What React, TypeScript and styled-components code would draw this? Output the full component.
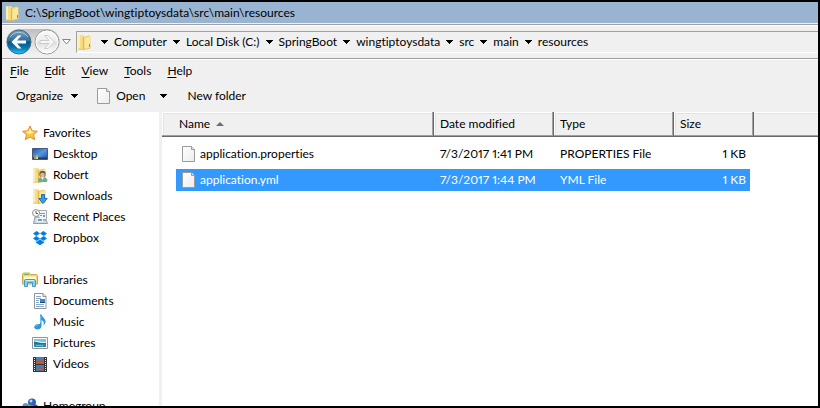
import React from "react";
import styled, { createGlobalStyle, css } from "styled-components";

const GlobalStyle = createGlobalStyle`
  *, *::before, *::after { box-sizing: border-box; }
  body {
    margin: 0;
    background: #000;
    color: #000;
    font: 12px/20px Lato, "Open Sans", sans-serif;
    font-variant-ligatures: none;
    font-variant-numeric: proportional-nums;
  }
  svg { display: block; flex: none; }
`;

const Window = styled.div`
  display: flex;
  flex-direction: column;
  height: 100vh;
  border: 2px solid #000;
  background: #f0f0f0;
  overflow: hidden;
  white-space: nowrap;
`;

const TitleBar = styled.header`
  display: flex;
  flex: none;
  align-items: center;
  gap: 6px;
  height: 21px;
  padding-left: 3px;
  background: #99b4d1;
`;

const Title = styled.h1`
  margin: 0;
  font: inherit;
`;

const AddressRow = styled.div`
  display: flex;
  flex: none;
  align-items: center;
  height: 36px;
  margin-top: 1px;
  padding-left: 4px;
  border-top: 1px solid #a0a0a0;
  border-bottom: 1px solid #fff;
  box-shadow: inset 0 1px #fff, inset 0 -1px #a0a0a0;
`;

const PlainButton = styled.button`
  display: flex;
  flex: none;
  align-items: center;
  padding: 0;
  border: 0;
  background: none;
  color: inherit;
  font: inherit;
`;

const History = styled.div`
  display: flex;
  align-items: center;
  gap: 2px;
  width: 70px;
`;

const HistoryPair = styled.div`
  display: flex;
  gap: 2px;
  border-radius: 13px;
  background: linear-gradient(#bdbdbd, #e2e2e2 60%, #f0f0f0);
`;

const AddressBox = styled.nav`
  display: flex;
  flex: 1;
  align-items: center;
  height: 22px;
  border-top: 1px solid #a0a0a0;
  border-left: 1px solid #a0a0a0;
  border-bottom: 1px solid #fff;
`;

const CrumbList = styled.ol`
  display: flex;
  margin: 0;
  padding: 0 0 0 4px;
  list-style: none;
`;

const Crumb = styled.li`
  display: flex;
  align-items: center;
`;

const CrumbArrow = styled(PlainButton)`
  padding: 0 6px;
`;

const CrumbLink = styled.a`
  color: inherit;
  text-decoration: none;
`;

const MenuBar = styled.nav`
  display: flex;
  flex: none;
  height: 22px;
`;

const MenuItem = styled(PlainButton)`
  padding: 0 8px;
`;

const AccessKey = styled.u`
  text-underline-offset: 2px;
`;

const ToolBar = styled.div`
  display: flex;
  flex: none;
  align-items: center;
  height: 30px;
  padding: 0 0 2px 14px;
`;

const ToolButton = styled(PlainButton)<{ $gap?: number; $after?: number }>`
  gap: ${(p) => p.$gap ?? 8}px;
  margin-right: ${(p) => p.$after ?? 0}px;
`;

const Body = styled.div`
  display: flex;
  flex: 1;
  min-height: 0;
`;

const Sidebar = styled.nav`
  flex: none;
  width: 160px;
  padding-top: 10px;
  border-right: 3px solid #f0f0f0;
  background: #fff;
  overflow: hidden;
`;

const Group = styled.section`
  margin-bottom: 21px;
`;

const PlaceLink = styled.a<{ $nested?: boolean }>`
  display: flex;
  align-items: center;
  gap: 5px;
  height: 21px;
  padding-left: ${(p) => (p.$nested ? 30 : 20)}px;
  color: inherit;
  text-decoration: none;
`;

const FilePane = styled.main`
  flex: 1;
  min-width: 0;
  background: #fff;
`;

const FileTable = styled.table`
  width: 100%;
  table-layout: fixed;
  border-collapse: separate;
  border-spacing: 0;
`;

const Col = styled.col<{ $width?: number }>`
  width: ${(p) => (p.$width ? `${p.$width}px` : "auto")};
`;

const HeadCell = styled.th<{ $indent?: number }>`
  height: 25px;
  padding: 0 0 0 ${(p) => p.$indent ?? 6}px;
  border-right: 1px solid #696969;
  border-bottom: 1px solid #696969;
  background: #f0f0f0;
  box-shadow: inset -1px -1px #a0a0a0, inset 1px 1px #fff, inset 2px 2px #e3e3e3;
  font-weight: 400;
  text-align: left;

  &:last-child { border-right: 0; box-shadow: inset 0 -1px #a0a0a0, inset 0 1px #fff, inset 0 2px #e3e3e3; }
`;

const SortButton = styled(PlainButton)`
  gap: 6px;
`;

const Cell = styled.td`
  padding: 4px 0 0;

  tr:first-child > & { padding-top: 6px; }
  &:first-child { padding-left: 14px; }
  &:nth-child(4) { padding-right: 4px; }
`;

const CellContent = styled.div<{ $selected?: boolean; $indent?: number; $end?: boolean }>`
  display: flex;
  align-items: center;
  justify-content: ${(p) => (p.$end ? "flex-end" : "flex-start")};
  gap: 5px;
  height: 22px;
  padding: 0 ${(p) => (p.$end ? 4 : 0)}px 0 ${(p) => p.$indent ?? 6}px;
  ${(p) =>
    p.$selected &&
    css`
      background: #3399ff;
      color: #fff;
    `}
`;

const DownArrow = () => (
  <svg width="7" height="4" viewBox="0 0 7 4" aria-hidden="true" shapeRendering="crispEdges">
    <path d="M0 0h7v1H0zM1 1h5v1H1zM2 2h3v1H2zM3 3h1v1H3z" />
  </svg>
);

const SortArrow = () => (
  <svg width="8" height="4" viewBox="0 0 8 4" aria-hidden="true">
    <path d="M4 0 8 4H0Z" fill="#6d6d6d" />
  </svg>
);

const BackIcon = () => (
  <svg width="26" height="26" viewBox="0 0 26 26" aria-hidden="true">
    <defs>
      <linearGradient id="backFill" x1="0" y1="0" x2="0" y2="1">
        <stop offset="0" stopColor="#7ba3bf" />
        <stop offset=".45" stopColor="#2c6f9e" />
        <stop offset=".5" stopColor="#0b5386" />
        <stop offset=".75" stopColor="#0878b4" />
        <stop offset="1" stopColor="#27c9f5" />
      </linearGradient>
    </defs>
    <circle cx="13" cy="13" r="12" fill="url(#backFill)" stroke="#456b82" />
    <path d="M4 8A11 11 0 0 1 22 8" fill="none" stroke="#c7dce8" strokeOpacity=".7" />
    <path d="M5.500 13 12 6.500h3.500L11 11.500h9v3h-9l4.500 5H12Z" fill="#fff" />
  </svg>
);

const ForwardIcon = () => (
  <svg width="26" height="26" viewBox="0 0 26 26" aria-hidden="true">
    <defs>
      <linearGradient id="forwardFill" x1="0" y1="0" x2="0" y2="1">
        <stop offset="0" stopColor="#fafafa" />
        <stop offset=".48" stopColor="#ececec" />
        <stop offset=".5" stopColor="#dedede" />
        <stop offset="1" stopColor="#fff" />
      </linearGradient>
    </defs>
    <circle cx="13" cy="13" r="12" fill="url(#forwardFill)" stroke="#8f9499" />
    <circle cx="13" cy="13" r="11" fill="none" stroke="#fff" />
    <path d="M20.500 13 14 6.500h-3.500l4.500 5H6v3h9l-4.500 5H14Z" fill="#f6f6f6" stroke="#c2c2c2" strokeWidth=".8" />
  </svg>
);

const HistoryArrow = () => (
  <svg width="9" height="6" viewBox="0 0 9 6" aria-hidden="true">
    <path d="M.7.500h7.600L4.500 5Z" fill="#fdfdfd" stroke="#80868c" />
  </svg>
);

const FolderShape = () => (
  <>
    <path d="M1 1.500 6 1l1 .8V15l-5 .5-1-1Z" fill="#f5dc85" />
    <path d="M1 1.500h2V15H1Z" fill="#fcefb4" />
    <path d="M5.500 3 12 1.500l1.500 1V14L7 15.500 5.500 14Z" fill="#efd272" />
    <path d="M7.500 4l5.500-1.500v11L7.500 15.500Z" fill="#fae79c" />
    <path d="M6.500 3v12.500" fill="none" stroke="#d6b24e" strokeWidth=".8" />
    <path d="M1 15l6 .5 6.500-1.500" fill="none" stroke="#dcba5c" strokeWidth=".8" />
  </>
);

const FolderIcon = () => (
  <svg width="14" height="16" viewBox="0 0 14 16" aria-hidden="true">
    <FolderShape />
    <path d="M12 10h1v3h-1z" fill="#4b9bd0" />
  </svg>
);

const PageIcon = () => (
  <svg width="13" height="16" viewBox="0 0 13 16" aria-hidden="true">
    <defs>
      <linearGradient id="paper" x1="0" y1="0" x2="1" y2="1">
        <stop offset="0" stopColor="#fff" />
        <stop offset="1" stopColor="#ececec" />
      </linearGradient>
    </defs>
    <path d="M.5.500h9l3 3v12H.5Z" fill="url(#paper)" stroke="#9b9b9b" />
    <path d="M9.500.500v3h3" fill="#e6e6e6" stroke="#9b9b9b" />
  </svg>
);

const StarIcon = () => (
  <svg width="16" height="16" viewBox="0 0 16 16" aria-hidden="true">
    <path d="M8 1l2.200 4.800 5.200.5-3.900 3.400 1.200 5L8 12l-4.700 2.700 1.200-5L.600 6.300l5.200-.5Z" fill="#fbc63c" stroke="#e8872c" strokeLinejoin="round" />
    <path d="M8 3l1.500 3.500 3 .5-5 2-4-2 3-.5Z" fill="#fff2a8" />
  </svg>
);

const DesktopIcon = () => (
  <svg width="16" height="16" viewBox="0 0 16 16" aria-hidden="true">
    <defs>
      <linearGradient id="screen" x1="0" y1="0" x2="1" y2="1">
        <stop offset="0" stopColor="#1f4fae" />
        <stop offset=".5" stopColor="#5b96dd" />
        <stop offset="1" stopColor="#1847a4" />
      </linearGradient>
    </defs>
    <path d="M.5 2.500h15v11H.5Z" fill="url(#screen)" stroke="#465a78" />
    <path d="M1 11.500h14V13H1Z" fill="#263a5d" />
    <path d="M2 9h2v2H2z" fill="#ec6b35" />
    <path d="M4 9h2v2H4z" fill="#89c949" />
    <path d="M2 11h2v2H2z" fill="#45a9ef" />
    <path d="M4 11h2v2H4z" fill="#f7d33f" />
  </svg>
);

const UserFolderIcon = () => (
  <svg width="16" height="16" viewBox="0 0 16 16" aria-hidden="true">
    <FolderShape />
    <path d="M6 14c0-3 2-4 4.500-4s5 1 5 4l-1 1H7Z" fill="#6ab090" />
    <path d="m9 10 1.500 3L12 10Z" fill="#fff" />
    <circle cx="10.500" cy="7" r="3.200" fill="#6f5a45" />
    <circle cx="10.500" cy="8" r="2.300" fill="#e3b692" />
  </svg>
);

const DownloadsIcon = () => (
  <svg width="16" height="16" viewBox="0 0 16 16" aria-hidden="true">
    <FolderShape />
    <path d="M9.500 6.500h3v4h2.700L11 15.500 6.800 10.500h2.700Z" fill="#35a0ed" stroke="#1c6fbd" strokeLinejoin="round" />
  </svg>
);

const RecentIcon = () => (
  <svg width="16" height="16" viewBox="0 0 16 16" aria-hidden="true">
    <path d="M5.500 1.500h9v9h-9Z" fill="#f4f7fa" stroke="#a5adb3" />
    <path d="M8 4h5v1H8zM8 6h2v1H8zM11 6h2v2h-2z" fill="#5e9cd4" />
    <path d="m3 8-1.500 6.500h14L14 11H8L7 8Z" fill="#d6dade" stroke="#949ba1" />
    <path d="M5 9h6v4H5z" fill="#eef4f8" />
    <path d="M6 10h4v2H6z" fill="#62a3b8" />
    <circle cx="4" cy="4" r="3.500" fill="#fafafa" stroke="#8d9499" />
    <path d="M4 2v2.500h2" fill="none" stroke="#556069" />
  </svg>
);

const DropboxIcon = () => (
  <svg width="16" height="16" viewBox="0 0 16 16" aria-hidden="true">
    <path d="M4.700 1 8 3.600 4.200 6 1 3.400ZM11.300 1 15 3.400 11.800 6 8 3.600ZM1 8.500 4.200 6 8 8.400 4.700 11ZM11.800 6 15 8.500 11.300 11 8 8.400ZM8 9.200l3.300 2.600 1-.6v1.300L8 15.200l-4.300-2.700v-1.300l1 .6Z" fill="#007ee5" />
  </svg>
);

const LibrariesIcon = () => (
  <svg width="16" height="16" viewBox="0 0 16 16" aria-hidden="true">
    <path d="M.5 2 1.500 1h6l1 1.500h6l1 1V12H.5Z" fill="#efd678" stroke="#cda84a" />
    <path d="M2 2h5v1H2z" fill="#6cbb4d" />
    <path d="M2 4.500h12V7H2Z" fill="#fff8d3" />
    <path d="M2.500 14.500v-6l1-1h9l1 1v6h-3v-4h-5v4Z" fill="#86cdee" stroke="#4799c5" />
    <path d="M4 8.500h8" stroke="#d2f0fc" />
  </svg>
);

const DocumentIcon = () => (
  <svg width="16" height="16" viewBox="0 0 16 16" aria-hidden="true">
    <path d="M2.500.500h8.500l3 3v12H2.500Z" fill="#fff" stroke="#8e969d" />
    <path d="M11 .5v3h3" fill="#dfe5ea" stroke="#8e969d" />
    <path d="M4 3.500h5M4 5.500h5M4 7.500h3M4 9.500h3M4 11.500h8M4 13.500h8" stroke="#8ea9cd" />
    <path d="M8 6h5v4H8z" fill="#3f81cf" />
    <path d="M8 9h5v1H8z" fill="#1c4c5d" />
  </svg>
);

const MusicIcon = () => (
  <svg width="16" height="16" viewBox="0 0 16 16" aria-hidden="true">
    <path d="M8 .5h1.500c.5 3 4.500 4 4 7.500-.2 1.500-1 2.500-2 3.500.7-2.500.5-4.500-2-5.500v6c0 2-1.800 3.500-4 3.500-2 0-3.300-1-3.300-2.500 0-2 2.300-3.500 5.800-3Z" fill="#2f94d9" />
    <path d="M3.500 12.500c.5-1 1.500-1.500 3-1.500M8.700 2v7" fill="none" stroke="#83caf4" />
  </svg>
);

const PicturesIcon = () => (
  <svg width="16" height="16" viewBox="0 0 16 16" aria-hidden="true">
    <path d="M.5 2.500h15v11H.5Z" fill="#fff" stroke="#8d949a" />
    <path d="M2 4h12v8H2Z" fill="#76c4ea" />
    <path d="M2 6c4-1 5 1 12 1v2H2Z" fill="#d8f0f5" />
    <path d="M2 6.500C6 7 9 8.500 14 8v1.500H2Z" fill="#2d7468" />
    <path d="M2 9h12v3H2Z" fill="#3387ab" />
    <path d="M4 10.500h7" stroke="#6abed0" />
  </svg>
);

const VideosIcon = () => (
  <svg width="16" height="16" viewBox="0 0 16 16" aria-hidden="true">
    <path d="M1 1h14v15H1Z" fill="#303538" />
    <path d="M4 1h8v7H4zM4 9h8v6H4z" fill="#2a86cf" />
    <path d="m4 3 3 2 2-2 3-1v4L9 7.500H7L4 7ZM5 10l3 1 4-1v4l-3-1-3 2Z" fill="#b7573d" />
    <path d="M2.500 2v13M13.500 2v13" stroke="#e5e9eb" strokeDasharray="1 1" />
  </svg>
);

const HomegroupIcon = () => (
  <svg width="16" height="16" viewBox="0 0 16 16" aria-hidden="true">
    <circle cx="10" cy="4.500" r="4" fill="#315fc0" />
    <circle cx="9" cy="3" r="1.500" fill="#b3d6fa" />
    <circle cx="3.500" cy="8" r="3" fill="#4aa3df" />
    <circle cx="13.500" cy="9" r="2.500" fill="#3557b1" />
    <circle cx="8" cy="10.500" r="4.200" fill="#47a83d" />
    <circle cx="7" cy="9" r="1.500" fill="#c5f2a0" />
  </svg>
);

const crumbs = ["Computer", "Local Disk (C:)", "SpringBoot", "wingtiptoysdata", "src", "main", "resources"];
const menus = ["File", "Edit", "View", "Tools", "Help"];

const groups = [
  {
    name: "Favorites",
    Icon: StarIcon,
    places: [
      { name: "Desktop", Icon: DesktopIcon },
      { name: "Robert", Icon: UserFolderIcon },
      { name: "Downloads", Icon: DownloadsIcon },
      { name: "Recent Places", Icon: RecentIcon },
      { name: "Dropbox", Icon: DropboxIcon },
    ],
  },
  {
    name: "Libraries",
    Icon: LibrariesIcon,
    places: [
      { name: "Documents", Icon: DocumentIcon },
      { name: "Music", Icon: MusicIcon },
      { name: "Pictures", Icon: PicturesIcon },
      { name: "Videos", Icon: VideosIcon },
    ],
  },
  { name: "Homegroup", Icon: HomegroupIcon, places: [] },
];

const files = [
  { name: "application.properties", modified: "7/3/2017 1:41 PM", type: "PROPERTIES File", size: "1 KB", selected: false },
  { name: "application.yml", modified: "7/3/2017 1:44 PM", type: "YML File", size: "1 KB", selected: true },
];

export default function App() {
  return (
    <>
      <GlobalStyle />
      <Window>
        <TitleBar>
          <FolderIcon />
          <Title>C:\SpringBoot\wingtiptoysdata\src\main\resources</Title>
        </TitleBar>
        <AddressRow>
          <History>
            <HistoryPair>
              <PlainButton aria-label="Back"><BackIcon /></PlainButton>
              <PlainButton aria-label="Forward"><ForwardIcon /></PlainButton>
            </HistoryPair>
            <PlainButton aria-label="Recent locations"><HistoryArrow /></PlainButton>
          </History>
          <AddressBox aria-label="Address">
            <FolderIcon />
            <CrumbList>
              {crumbs.map((name) => (
                <Crumb key={name}>
                  <CrumbArrow aria-label={`Folders before ${name}`}><DownArrow /></CrumbArrow>
                  <CrumbLink href="#">{name}</CrumbLink>
                </Crumb>
              ))}
            </CrumbList>
          </AddressBox>
        </AddressRow>
        <MenuBar aria-label="Menu">
          {menus.map((name) => (
            <MenuItem key={name}>
              <span><AccessKey>{name[0]}</AccessKey>{name.slice(1)}</span>
            </MenuItem>
          ))}
        </MenuBar>
        <ToolBar>
          <ToolButton $after={19}>Organize <DownArrow /></ToolButton>
          <ToolButton $gap={6} $after={15}><PageIcon />Open</ToolButton>
          <ToolButton $after={20} aria-label="Open with"><DownArrow /></ToolButton>
          <ToolButton>New folder</ToolButton>
        </ToolBar>
        <Body>
          <Sidebar aria-label="Places">
            {groups.map(({ name, Icon, places }) => (
              <Group key={name}>
                <PlaceLink href="#"><Icon />{name}</PlaceLink>
                {places.map((place) => (
                  <PlaceLink key={place.name} href="#" $nested>
                    <place.Icon />{place.name}
                  </PlaceLink>
                ))}
              </Group>
            ))}
          </Sidebar>
          <FilePane>
            <FileTable>
              <colgroup>
                <Col $width={272} />
                <Col $width={120} />
                <Col $width={120} />
                <Col $width={80} />
                <Col />
              </colgroup>
              <thead>
                <tr>
                  <HeadCell $indent={17} aria-sort="ascending">
                    <SortButton>Name <SortArrow /></SortButton>
                  </HeadCell>
                  <HeadCell>Date modified</HeadCell>
                  <HeadCell>Type</HeadCell>
                  <HeadCell>Size</HeadCell>
                  <HeadCell aria-hidden="true" />
                </tr>
              </thead>
              <tbody>
                {files.map((file) => (
                  <tr key={file.name} aria-selected={file.selected}>
                    <Cell>
                      <CellContent $selected={file.selected}><PageIcon />{file.name}</CellContent>
                    </Cell>
                    <Cell><CellContent $selected={file.selected}>{file.modified}</CellContent></Cell>
                    <Cell><CellContent $selected={file.selected}>{file.type}</CellContent></Cell>
                    <Cell><CellContent $selected={file.selected} $end>{file.size}</CellContent></Cell>
                    <Cell />
                  </tr>
                ))}
              </tbody>
            </FileTable>
          </FilePane>
        </Body>
      </Window>
    </>
  );
}
